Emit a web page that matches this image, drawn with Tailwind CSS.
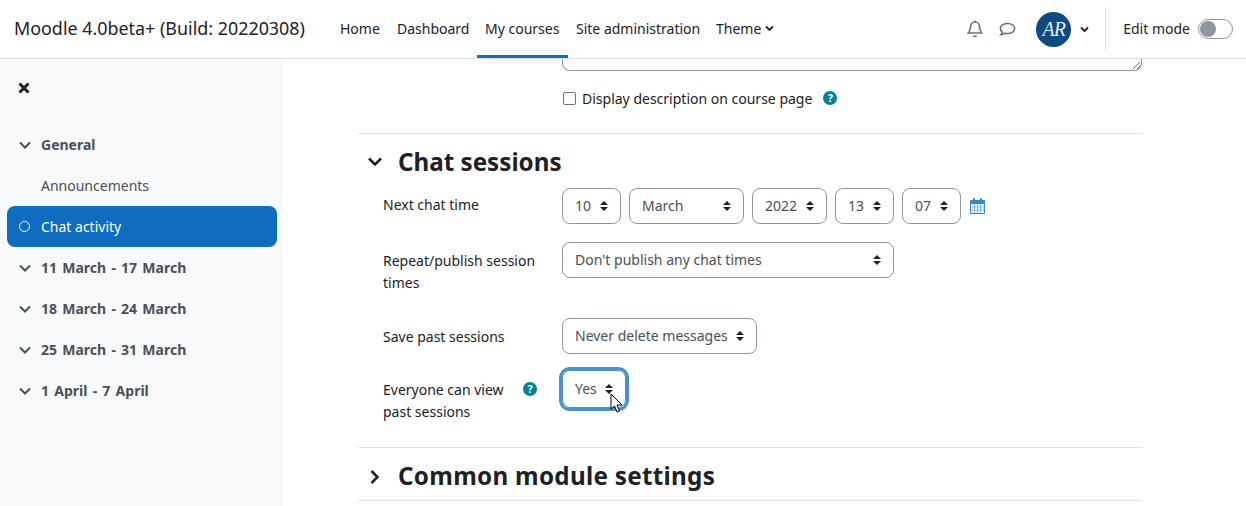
<!DOCTYPE html>
<html lang="en">
<head>
<meta charset="UTF-8">
<title>Moodle</title>
<script src="https://cdn.jsdelivr.net/npm/@tailwindcss/browser@4"></script>
</head>
<body class="h-[506px] overflow-hidden bg-white font-['Noto_Sans',sans-serif] text-[14px] text-[#1d2125]">

<!-- top bar -->
<header class="h-[59px] border-b border-[#dee2e6] flex items-center pl-[14px] pr-[13px]">
  <div class="text-[17.9px] w-[318px] whitespace-nowrap mb-[2px]">Moodle 4.0beta+ (Build: 20220308)</div>
  <nav class="flex h-[58px] items-stretch">
    <a class="px-[8px] pb-[2px] w-[57px] flex items-center">Home</a>
    <a class="px-[8px] pb-[2px] flex items-center w-[88px]">Dashboard</a>
    <a class="px-[8px] pt-[1px] flex items-center w-[91px] border-b-[3px] border-[#0f6cbf]">My courses</a>
    <a class="px-[8px] pb-[2px] flex items-center w-[140px] whitespace-nowrap">Site administration</a>
    <a class="px-[8px] pb-[2px] flex items-center gap-[4px]">Theme
      <svg width="9" height="7" viewBox="0 0 9 7" fill="none" stroke="#1d2125" stroke-width="1.8"><path d="M1 1.500l3.500 3.500L8 1.500"/></svg>
    </a>
  </nav>
  <div class="ml-auto flex items-center h-[44px]">
    <svg width="16" height="18" viewBox="0 0 16 18" fill="none" stroke="#6a737b" stroke-width="1.600"><path d="M8 2c-3 0-4.500 2.300-4.500 5 0 3-1 4.500-2.300 6h13.600c-1.300-1.500-2.300-3-2.300-6 0-2.700-1.500-5-4.500-5z"/><path d="M8 .5v1.500M6.500 15.500a1.600 1.600 0 0 0 3 0"/></svg>
    <svg class="ml-[16px]" width="17" height="15" viewBox="0 0 17 15" fill="none" stroke="#6a737b" stroke-width="1.600"><path d="M8.500 1.500c-4 0-7.200 2.200-7.200 5 0 1.400.8 2.600 2 3.500-.2 1.100-.7 2-1.500 2.800 1.600-.2 3-.8 4-1.600.8.200 1.700.3 2.700.3 4 0 7.200-2.200 7.200-5s-3.200-5-7.200-5z"/></svg>
    <div class="ml-[20px] w-[35px] h-[35px] rounded-full bg-[#0c4a80] flex items-center justify-center text-[#e4ebf2] font-['Liberation_Serif',serif] italic text-[20px] tracking-[-1px]">AR</div>
    <svg class="ml-[9px]" width="9" height="7" viewBox="0 0 9 7" fill="none" stroke="#1d2125" stroke-width="1.8"><path d="M1 1.500l3.500 3.500L8 1.500"/></svg>
    <div class="ml-[16px] w-px h-[44px] bg-[#dee2e6]"></div>
    <span class="ml-[17px] mb-[2px]">Edit mode</span>
    <div class="ml-[8px] w-[35px] h-[20px] rounded-full border border-[#8f959e] flex items-center pl-[1px]">
      <div class="w-[16px] h-[16px] rounded-full bg-[#8f959e]"></div>
    </div>
  </div>
</header>

<div class="flex h-[447px]">
  <!-- course index -->
  <aside class="w-[283px] bg-[#f8f9fa] shrink-0 pl-[7px] pr-[6px] text-[#495057]">
    <div class="h-[58px] pl-[11px] flex items-center">
      <svg width="12" height="12" viewBox="0 0 12 12" stroke="#1d2125" stroke-width="3"><path d="M1.500 1.500l9 9M10.500 1.500l-9 9"/></svg>
    </div>
    <div class="h-[48px] flex items-center font-bold pt-[7px]">
      <svg class="ml-[12px] mr-[10px]" width="12" height="8" viewBox="0 0 12 8" fill="none" stroke="#495057" stroke-width="2"><path d="M1 1.500l5 5 5-5"/></svg>General
    </div>
    <div class="h-[41px] flex items-center pl-[34px]">Announcements</div>
    <div class="h-[41px] flex items-center bg-[#0f6cbf] rounded-[8px] text-white">
      <span class="ml-[12px] mr-[11px] w-[11px] h-[11px] rounded-full border border-white"></span>Chat activity
    </div>
    <div class="h-[41px] flex items-center font-bold [word-spacing:1.6px]">
      <svg class="ml-[12px] mr-[10px]" width="12" height="8" viewBox="0 0 12 8" fill="none" stroke="#495057" stroke-width="2"><path d="M1 1.500l5 5 5-5"/></svg>11 March - 17 March
    </div>
    <div class="h-[41px] flex items-center font-bold [word-spacing:1.6px]">
      <svg class="ml-[12px] mr-[10px]" width="12" height="8" viewBox="0 0 12 8" fill="none" stroke="#495057" stroke-width="2"><path d="M1 1.500l5 5 5-5"/></svg>18 March - 24 March
    </div>
    <div class="h-[41px] flex items-center font-bold [word-spacing:1.6px]">
      <svg class="ml-[12px] mr-[10px]" width="12" height="8" viewBox="0 0 12 8" fill="none" stroke="#495057" stroke-width="2"><path d="M1 1.500l5 5 5-5"/></svg>25 March - 31 March
    </div>
    <div class="h-[41px] flex items-center font-bold [word-spacing:1.6px]">
      <svg class="ml-[12px] mr-[10px]" width="12" height="8" viewBox="0 0 12 8" fill="none" stroke="#495057" stroke-width="2"><path d="M1 1.500l5 5 5-5"/></svg>1 April - 7 April
    </div>
  </aside>

  <!-- form -->
  <main class="w-[784px] ml-[75px] shrink-0">
    <div class="ml-[204px] h-[12px] border-x border-b border-[#8f959e] rounded-b-[8px] relative">
      <svg class="absolute right-0 bottom-0" width="9" height="9" viewBox="0 0 9 9" stroke="#6a737b" fill="none"><path d="M1 8l7-7M5 8l3-3"/></svg>
    </div>
    <div class="ml-[205px] mt-[18px] h-[18px] flex items-center">
      <span class="w-[13px] h-[13px] border border-[#6a737b] rounded-[2px] bg-white"></span>
      <span class="ml-[6px]">Display description on course page</span>
      <span class="ml-[11px] w-[14px] h-[14px] rounded-full bg-[#008196] text-white text-[11px] font-bold flex items-center justify-center">?</span>
    </div>
    <div class="mt-[26px] border-t border-[#dee2e6] h-[55px] pt-[2px] flex items-center">
      <svg class="ml-[10px]" width="14" height="10" viewBox="0 0 14 10" fill="none" stroke="#1d2125" stroke-width="2.500"><path d="M1 1.500l6 6 6-6"/></svg>
      <h3 class="ml-[16px] text-[24.2px] font-bold">Chat sessions</h3>
    </div>

    <div class="flex">
      <div class="w-[204px] pl-[25px] pt-[6px]">Next chat time</div>
      <div class="flex items-center">
        <div class="h-[36px] w-[59px] border border-[#8f959e] rounded-[8px] flex items-center justify-between pl-[12px] pr-[12px] text-[#495057]"><span class="-mt-[1px]">10</span>
          <svg width="8" height="12" viewBox="0 0 8 12" fill="#1d2125"><path d="M0 5l4-4 4 4zM0 7l4 4 4-4z"/></svg></div>
        <div class="ml-[8px] h-[36px] w-[115px] border border-[#8f959e] rounded-[8px] flex items-center justify-between pl-[12px] pr-[12px] text-[#495057]"><span class="-mt-[1px]">March</span>
          <svg width="8" height="12" viewBox="0 0 8 12" fill="#1d2125"><path d="M0 5l4-4 4 4zM0 7l4 4 4-4z"/></svg></div>
        <div class="ml-[8px] h-[36px] w-[75px] border border-[#8f959e] rounded-[8px] flex items-center justify-between pl-[12px] pr-[12px] text-[#495057]"><span class="-mt-[1px]">2022</span>
          <svg width="8" height="12" viewBox="0 0 8 12" fill="#1d2125"><path d="M0 5l4-4 4 4zM0 7l4 4 4-4z"/></svg></div>
        <div class="ml-[8px] h-[36px] w-[59px] border border-[#8f959e] rounded-[8px] flex items-center justify-between pl-[12px] pr-[12px] text-[#495057]"><span class="-mt-[1px]">13</span>
          <svg width="8" height="12" viewBox="0 0 8 12" fill="#1d2125"><path d="M0 5l4-4 4 4zM0 7l4 4 4-4z"/></svg></div>
        <div class="ml-[8px] h-[36px] w-[59px] border border-[#8f959e] rounded-[8px] flex items-center justify-between pl-[12px] pr-[12px] text-[#495057]"><span class="-mt-[1px]">07</span>
          <svg width="8" height="12" viewBox="0 0 8 12" fill="#1d2125"><path d="M0 5l4-4 4 4zM0 7l4 4 4-4z"/></svg></div>
        <svg class="ml-[9px]" width="15" height="16" viewBox="0 0 15 16"><rect x="0" y="2" width="15" height="14" rx="1" fill="#3d86c8"/><rect x="1" y="6" width="13" height="9" fill="#eaf1f8"/><path d="M1 9h13M1 12h13M4.500 6v9M7.500 6v9M10.500 6v9" stroke="#5f9ad2" stroke-width=".6"/><rect x="3" y="0" width="2" height="4" rx="1" fill="#3d86c8"/><rect x="10" y="0" width="2" height="4" rx="1" fill="#3d86c8"/></svg>
      </div>
    </div>

    <div class="flex mt-[18px]">
      <div class="w-[204px] pl-[25px] pr-[20px] leading-[22px] pt-[8px]">Repeat/publish session times</div>
      <div class="h-[36px] w-[332px] border border-[#8f959e] rounded-[8px] flex items-center justify-between pl-[12px] pr-[12px] text-[#495057]"><span class="-mt-[1px]">Don't publish any chat times</span>
        <svg width="8" height="12" viewBox="0 0 8 12" fill="#1d2125"><path d="M0 5l4-4 4 4zM0 7l4 4 4-4z"/></svg></div>
    </div>

    <div class="flex mt-[24px]">
      <div class="w-[204px] pl-[25px] leading-[22px] pt-[8px]">Save past sessions</div>
      <div class="h-[36px] w-[195px] border border-[#8f959e] rounded-[8px] flex items-center justify-between pl-[12px] pr-[12px] text-[#495057]"><span class="-mt-[1px]">Never delete messages</span>
        <svg width="8" height="12" viewBox="0 0 8 12" fill="#1d2125"><path d="M0 5l4-4 4 4zM0 7l4 4 4-4z"/></svg></div>
    </div>

    <div class="flex mt-[16px] h-[77px]">
      <div class="w-[204px] pl-[25px] flex items-start leading-[22px] pt-[9px]">
        <span class="w-[128px]">Everyone can view past sessions</span>
        <span class="mt-[3px] ml-[12px] w-[14px] h-[14px] rounded-full bg-[#008196] text-white text-[11px] font-bold flex items-center justify-center">?</span>
      </div>
      <div class="relative h-[38px] w-[64px] border border-[#4a90d0] rounded-[8px] ring-[3px] ring-[#4a90d0] flex items-center justify-between pl-[12px] pr-[12px] text-[#495057]"><span class="-mt-[1px]">Yes</span>
        <svg width="8" height="12" viewBox="0 0 8 12" fill="#1d2125"><path d="M0 5l4-4 4 4zM0 7l4 4 4-4z"/></svg>
        <svg class="absolute left-[47px] top-[22px]" width="14" height="21" viewBox="0 0 14 21"><path d="M1 1v15l3.500-3 2.500 6 2.500-1-2.500-6h5z" fill="#fff" stroke="#000" stroke-width="1"/></svg>
      </div>
    </div>

    <div class="border-t border-[#dee2e6] h-[53px] pt-[5px] flex items-center">
      <svg class="ml-[12px]" width="10" height="14" viewBox="0 0 10 14" fill="none" stroke="#1d2125" stroke-width="2.500"><path d="M1.500 1l6 6-6 6"/></svg>
      <h3 class="ml-[18px] text-[24.2px] font-bold tracking-[.3px]">Common module settings</h3>
    </div>
    <div class="border-t border-[#dee2e6]"></div>
  </main>
</div>
</body>
</html>
